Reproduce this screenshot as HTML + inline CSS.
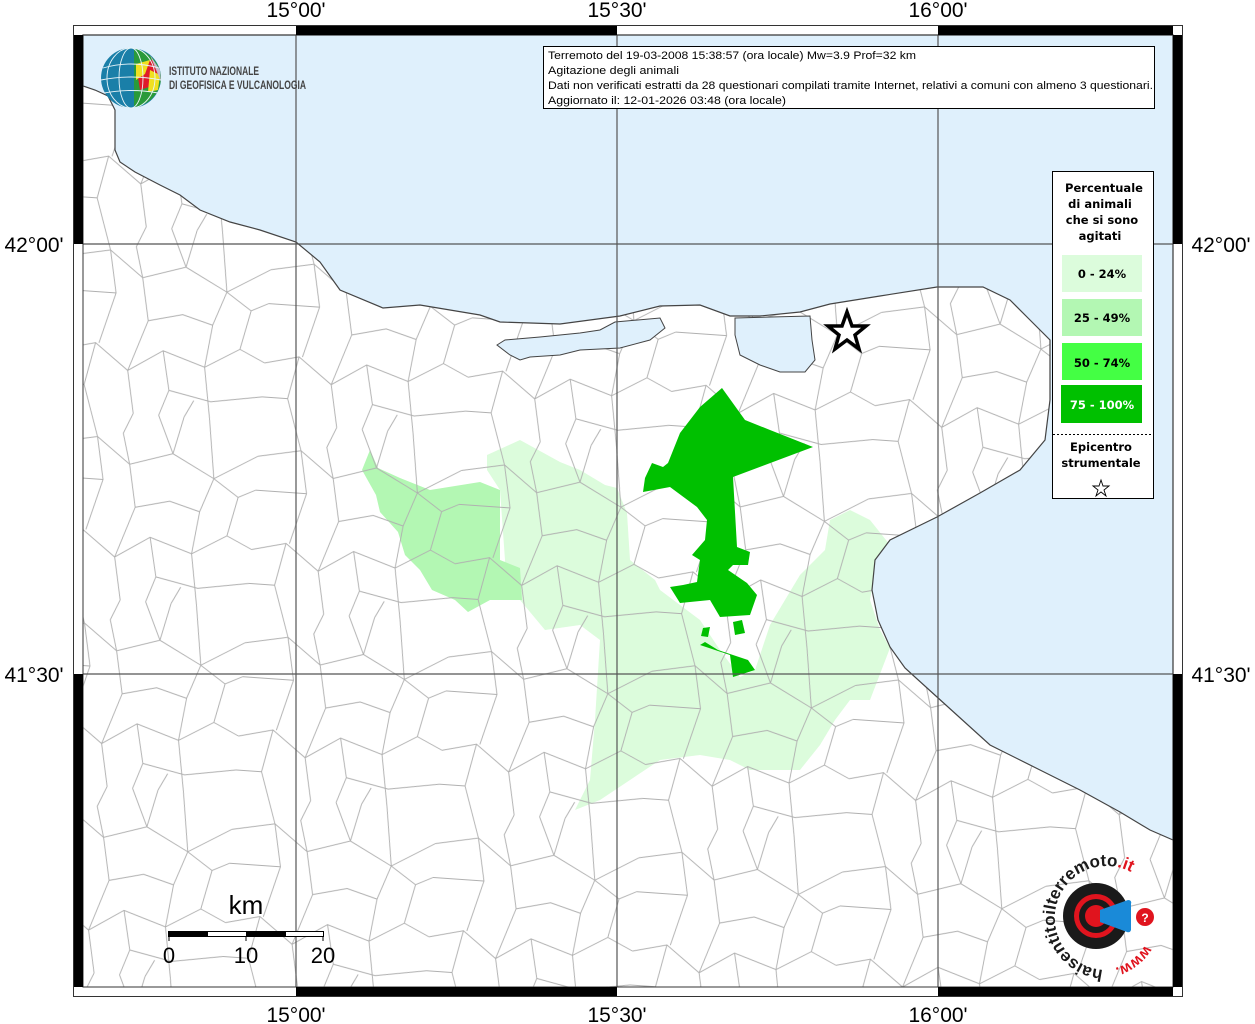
<!DOCTYPE html>
<html><head><meta charset="utf-8"><style>
html,body{margin:0;padding:0;background:#fff;}
svg{display:block;}
text{font-family:"Liberation Sans",sans-serif;}
text.dv{font-family:"DejaVu Sans",sans-serif;font-weight:bold;font-size:11.5px;}
</style></head><body>
<svg width="1255" height="1024" viewBox="0 0 1255 1024" xmlns="http://www.w3.org/2000/svg">
<defs>
<pattern id="pat" width="120" height="110" patternUnits="userSpaceOnUse" patternTransform="translate(83,35) rotate(4) scale(1.7)">
<path fill="none" stroke="#b0b0b0" stroke-width="0.55" d="M0,20 L25,15 L45,30 L70,22 L95,35 L120,20 M0,75 L20,70 L40,85 L60,72 L85,80 L105,68 L120,75 M25,15 L30,40 L22,70 M45,30 L50,55 L40,85 L45,110 M70,22 L75,0 M95,35 L88,55 L85,80 L90,110 M105,68 L110,45 L120,40 M50,55 L70,50 L88,55 M60,72 L65,95 L60,110 M20,70 L15,95 L20,110 M0,95 L15,95 M65,95 L90,100 L120,95 M20,0 L25,15 M45,0 L40,12 L45,30 M60,0 L70,22 M90,0 L95,35 M75,110 L80,100 M0,40 L30,40 M110,45 L95,35"/>
</pattern>
</defs>
<rect width="1255" height="1024" fill="#fff"/>
<polygon fill="#dcfcdc" points="487,455 520,440 560,462 580,470 605,485 617,488 627,513 630,560 655,580 660,590 700,620 720,650 740,677 755,670 770,625 800,575 825,550 830,520 850,510 870,520 890,545 875,570 870,600 880,630 890,648 870,700 850,700 835,720 820,745 800,770 750,770 730,760 700,755 660,760 630,780 600,800 575,810 590,780 595,720 600,640 580,625 545,630 520,600 500,590 505,560 500,490 487,470"/>
<polygon fill="#b3f7b3" points="370,450 378,468 400,478 430,490 480,482 500,490 500,560 520,568 522,600 490,600 468,612 455,600 432,590 420,570 405,555 398,532 380,512 376,495 362,470"/>
<polygon fill="#fff" points="627,513 650,500 673,493 697,510 703,537 697,563 687,583 673,580 650,570 637,550 630,527"/>
<rect x="83" y="35" width="1090" height="952" fill="url(#pat)"/>
<polygon fill="#00c000" points="722,388 745,420 770,430 813,447 733,477 737,547 750,552 748,565 733,565 728,570 747,583 757,595 750,615 720,617 710,600 680,603 670,587 683,585 697,582 700,560 692,555 705,540 707,520 697,507 670,487 643,492 645,478 652,463 663,467 668,463 680,433 700,407"/>
<polygon fill="#00c000" points="700,645 730,655 733,677 755,670 748,660 718,650 705,642"/>
<polygon fill="#00c000" points="733,622 742,620 745,633 735,635"/>
<polygon fill="#00c000" points="703,628 710,627 708,637 701,636"/>
<path fill="#dff0fc" stroke="#444" stroke-width="1.2" d="M83,35 L1173,35 L1173,840 L1150,830 L1120,812 L1080,790 L1040,770 L990,745 L937,697 L905,668 L890,647 L878,620 L872,590 L875,560 L890,540 L937,517 L980,493 L1020,470 L1045,440 L1050,400 L1050,340 L1030,320 L1010,300 L983,287 L937,287 L880,296 L830,304 L800,312 L760,316 L730,316 L700,305 L660,306 L620,316 L560,324 L500,322 L480,315 L420,305 L383,308 L340,290 L320,262 L296,242 L260,230 L230,222 L200,210 L180,195 L160,185 L135,172 L120,162 L115,150 L115,110 L108,96 L95,90 L83,86 Z"/>
<polygon fill="#dff0fc" stroke="#444" stroke-width="1" points="497,345 505,340 540,337 580,333 600,330 615,322 660,318 665,328 650,340 620,348 580,350 560,355 530,357 520,360 510,355"/>
<polygon fill="#dff0fc" stroke="#444" stroke-width="1" points="735,318 810,316 812,340 815,360 805,372 780,372 760,365 740,355 735,335"/>
<g stroke="#555" stroke-width="1.2">
<line x1="296" y1="35" x2="296" y2="987"/><line x1="617" y1="35" x2="617" y2="987"/><line x1="938" y1="35" x2="938" y2="987"/>
<line x1="83" y1="244" x2="1173" y2="244"/><line x1="83" y1="674" x2="1173" y2="674"/>
</g>
<rect x="73.5" y="25.5" width="1109" height="971" fill="none" stroke="#333" stroke-width="1"/>
<rect x="83" y="35" width="1090" height="952" fill="none" stroke="#333" stroke-width="1"/>
<g fill="#000">
<rect x="296" y="26" width="321" height="9"/><rect x="938" y="26" width="235" height="9"/>
<rect x="296" y="987" width="321" height="9"/><rect x="938" y="987" width="235" height="9"/>
<rect x="74" y="35" width="9" height="209"/><rect x="74" y="674" width="9" height="313"/>
<rect x="1173" y="35" width="9" height="209"/><rect x="1173" y="674" width="9" height="313"/>
</g>
<g font-size="21" fill="#000" text-anchor="middle">
<text x="296" y="17">15°00'</text><text x="617" y="17">15°30'</text><text x="938" y="17">16°00'</text>
<text x="296" y="1022">15°00'</text><text x="617" y="1022">15°30'</text><text x="938" y="1022">16°00'</text>
<text x="34" y="252">42°00'</text><text x="34" y="682">41°30'</text>
<text x="1221" y="252">42°00'</text><text x="1221" y="682">41°30'</text>
</g>
<g>
<circle cx="131" cy="78" r="30" fill="#1a7fa8"/>
<path d="M134,49 A30,30 0 0 1 161,78 A30,30 0 0 1 134,107 Z" fill="#2a9a3a"/>
<path d="M136,65 L152,60 L158,72 L158,84 L140,90 Z" fill="#e01a2a"/>
<path d="M136,64 L150,60 L145,74 L136,80 Z" fill="#f0e020"/>
<path d="M150,70 L160,75 L158,90 L148,92 Z" fill="#f0e020"/>
<path d="M150,55 L160,70 L161,82 Z" fill="#c8b8c8"/>
<g fill="none" stroke="#e8f4f8" stroke-width="0.9">
<ellipse cx="131" cy="78" rx="12" ry="30"/><ellipse cx="131" cy="78" rx="24" ry="30"/>
<path d="M103,68 Q131,60 159,68"/><path d="M101,80 Q131,74 161,80"/><path d="M104,93 Q131,88 158,93"/>
</g>
<text x="169" y="75" font-size="11.5" font-weight="bold" fill="#444" textLength="90" lengthAdjust="spacingAndGlyphs">ISTITUTO NAZIONALE</text>
<text x="169" y="89" font-size="11.5" font-weight="bold" fill="#444" textLength="137" lengthAdjust="spacingAndGlyphs">DI GEOFISICA E VULCANOLOGIA</text>
</g>
<rect x="543.5" y="46.5" width="611" height="62" fill="#fff" stroke="#000"/>
<g font-size="11" fill="#000">
<text x="548" y="59" textLength="368" lengthAdjust="spacingAndGlyphs">Terremoto del 19-03-2008 15:38:57 (ora locale) Mw=3.9 Prof=32 km</text>
<text x="548" y="74" textLength="131" lengthAdjust="spacingAndGlyphs">Agitazione degli animali</text>
<text x="548" y="89" textLength="605" lengthAdjust="spacingAndGlyphs">Dati non verificati estratti da 28 questionari compilati tramite Internet, relativi a comuni con almeno 3 questionari.</text>
<text x="548" y="104" textLength="238" lengthAdjust="spacingAndGlyphs">Aggiornato il: 12-01-2026 03:48 (ora locale)</text>
</g>
<polygon points="847,312 852,326 866,326 855,335 859,349 847,340 835,349 839,335 828,326 842,326" fill="#fff" stroke="#000" stroke-width="3.5"/>
<rect x="1052.5" y="171.5" width="101" height="327" fill="#fff" stroke="#000"/>
<g text-anchor="middle" fill="#000">
<text class="dv" x="1104" y="192">Percentuale</text><text class="dv" x="1100" y="208">di animali</text><text class="dv" x="1102" y="224">che si sono</text><text class="dv" x="1100" y="240">agitati</text>
<rect x="1062" y="255" width="80" height="37" fill="#dcfcdc"/><text class="dv" x="1102" y="278">0 - 24%</text>
<rect x="1062" y="299" width="80" height="37" fill="#b3f7b3"/><text class="dv" x="1102" y="322">25 - 49%</text>
<rect x="1062" y="343" width="80" height="37" fill="#44ff44"/><text class="dv" x="1102" y="367">50 - 74%</text>
<rect x="1061" y="385" width="81" height="38" fill="#00c000"/><text class="dv" x="1102" y="409" fill="#fff">75 - 100%</text>
<line x1="1053" y1="434.5" x2="1153" y2="434.5" stroke="#000" stroke-dasharray="2,2"/>
<text class="dv" x="1101" y="451">Epicentro</text><text class="dv" x="1101" y="467">strumentale</text>
</g>
<polygon points="1101,480 1103,486 1109,486 1104,490 1106,496 1101,492 1096,496 1098,490 1093,486 1099,486" fill="#fff" stroke="#000" stroke-width="0.9"/>
<rect x="168.5" y="931.5" width="155" height="5" fill="#fff" stroke="#000"/>
<rect x="168" y="931" width="40" height="6" fill="#000"/><rect x="246" y="931" width="40" height="6" fill="#000"/>
<g stroke="#000"><line x1="169" y1="936" x2="169" y2="941"/><line x1="246" y1="936" x2="246" y2="941"/><line x1="323" y1="936" x2="323" y2="941"/></g>
<g font-size="22" text-anchor="middle" fill="#000">
<text x="246" y="914" font-size="26">km</text>
<text x="169" y="963">0</text><text x="246" y="963">10</text><text x="323" y="963">20</text>
</g>
<g>
<circle cx="1096" cy="916" r="33" fill="#1a1a1a"/>
<circle cx="1096" cy="916" r="22" fill="#e0141e"/>
<circle cx="1096" cy="916" r="17" fill="#1a1a1a"/>
<circle cx="1096" cy="916" r="11" fill="#e0141e"/>
<path d="M1100,910 L1128,900 Q1132,900 1131,904 L1131,930 Q1130,933 1127,932 L1100,922 Z" fill="#1a8ad8"/>
<circle cx="1145" cy="917" r="9" fill="#e0141e"/>
<text x="1145" y="922" font-size="12" font-weight="bold" fill="#fff" text-anchor="middle">?</text>
<defs><path id="arc" d="M1106,970 A52,52 0 1 1 1140,878"/><path id="arc2" d="M1145,945 A52,52 0 0 1 1098,970"/></defs>
<text font-size="17" font-weight="bold" fill="#1a1a1a"><textPath href="#arc" startOffset="3">haisentitoilterremoto<tspan fill="#e0141e">.it</tspan></textPath></text>
<text font-size="15" font-weight="bold" fill="#e0141e"><textPath href="#arc2">www.</textPath></text>
</g>
</svg>
</body></html>
